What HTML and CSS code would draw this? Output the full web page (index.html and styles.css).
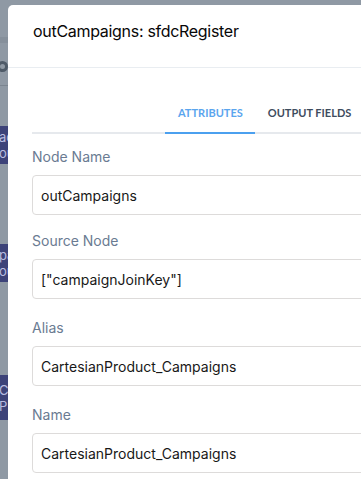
FILE: index.html
```html
<!DOCTYPE html>
<html lang="en">
<head>
<meta charset="UTF-8">
<meta name="viewport" content="width=device-width, initial-scale=1.0">
<title>outCampaigns: sfdcRegister</title>
<link rel="stylesheet" href="styles.css">
</head>
<body>
<div class="page">
    <div class="backdrop">
        <div class="bd-band"></div>
        <div class="bd-icon"></div>
        <div class="bd-line"></div>
        <div class="bd-node bd-node-1"><span>ac</span><span>ou</span></div>
        <div class="bd-node bd-node-2"><span>pa</span><span>ou</span></div>
        <div class="bd-node bd-node-3"><span>C</span><span>P</span></div>
    </div>
    <div class="modal">
        <div class="modal-header">
            <h2>outCampaigns: sfdcRegister</h2>
        </div>
        <div class="modal-body">
            <ul class="tabs">
                <li class="tab active">ATTRIBUTES</li>
                <li class="tab">OUTPUT FIELDS</li>
            </ul>
            <form class="node-form">
                <div class="field">
                    <label for="nodeName">Node Name</label>
                    <input type="text" id="nodeName" value="outCampaigns">
                </div>
                <div class="field">
                    <label for="sourceNode">Source Node</label>
                    <input type="text" id="sourceNode" value='["campaignJoinKey"]'>
                </div>
                <div class="field">
                    <label for="alias">Alias</label>
                    <input type="text" id="alias" value="CartesianProduct_Campaigns">
                </div>
                <div class="field">
                    <label for="name">Name</label>
                    <input type="text" id="name" value="CartesianProduct_Campaigns">
                </div>
            </form>
        </div>
    </div>
</div>
</body>
</html>
```

FILE: styles.css
```css
html, body {
    margin: 0;
    padding: 0;
    height: 100%;
    overflow: hidden;
}
body {
    font-family: Inter, Lato, sans-serif;
    background-color: #8f99a4;
}
.page {
    display: flex;
    height: 100%;
}
.backdrop {
    width: 8px;
    flex-shrink: 0;
    overflow: hidden;
}
.bd-band {
    height: 6px;
    margin-top: 37px;
    background-color: #86909b;
}
.bd-icon {
    width: 11px;
    height: 11px;
    margin: 18px 0 0 -3px;
    border: 3px solid #4f5b68;
    border-radius: 50%;
    box-sizing: border-box;
}
.bd-line {
    height: 1px;
    margin-top: 13px;
    background-color: #7b8590;
}
.bd-node {
    display: flex;
    flex-direction: column;
    justify-content: center;
    height: 38px;
    background-color: #3d4379;
    color: #b9bde0;
    font-size: 13px;
    line-height: 16px;
    white-space: nowrap;
}
.bd-node span {
    margin-left: -1px;
}
.bd-node-1 {
    margin-top: 40px;
}
.bd-node-2 {
    margin-top: 80px;
}
.bd-node-3 {
    margin-top: 93px;
    height: 45px;
}
.modal {
    width: 440px;
    flex-shrink: 0;
    margin-top: 5px;
    background-color: #fff;
    border-top-left-radius: 5px;
}
.modal-header {
    padding: 14px 25px 24px;
    border-bottom: 1px solid #e9edf1;
}
.modal-header h2 {
    margin: 0;
    font-size: 16px;
    font-weight: normal;
    line-height: 24px;
    letter-spacing: -0.3px;
    color: #080707;
}
.modal-body {
    padding: 0 24px;
}
.tabs {
    display: flex;
    margin: 0;
    padding: 0 0 0 133px;
    list-style: none;
    border-bottom: 2px solid #e6e9ed;
}
.tab {
    padding: 37px 12px 11px 13px;
    margin-bottom: -2px;
    font-family: Lato, Inter, sans-serif;
    font-size: 11px;
    font-weight: bold;
    line-height: 16px;
    color: #3e4c5e;
    border-bottom: 2px solid transparent;
}
.tab.active {
    color: #5aa5ee;
    border-bottom-color: #4ba0ef;
}
.node-form {
    padding-top: 13px;
}
.field {
    display: flex;
    flex-direction: column;
    margin-bottom: 19px;
}
.field:first-child {
    margin-bottom: 16px;
}
.field label {
    font-size: 14px;
    line-height: 20px;
    color: #6a7b92;
    margin-bottom: 8px;
}
.field input {
    height: 40px;
    box-sizing: border-box;
    padding: 0 8px;
    border: 1px solid #dddbda;
    border-radius: 4px;
    font-family: Inter, Lato, sans-serif;
    font-size: 14px;
    color: #181818;
    background-color: #fff;
}
```
